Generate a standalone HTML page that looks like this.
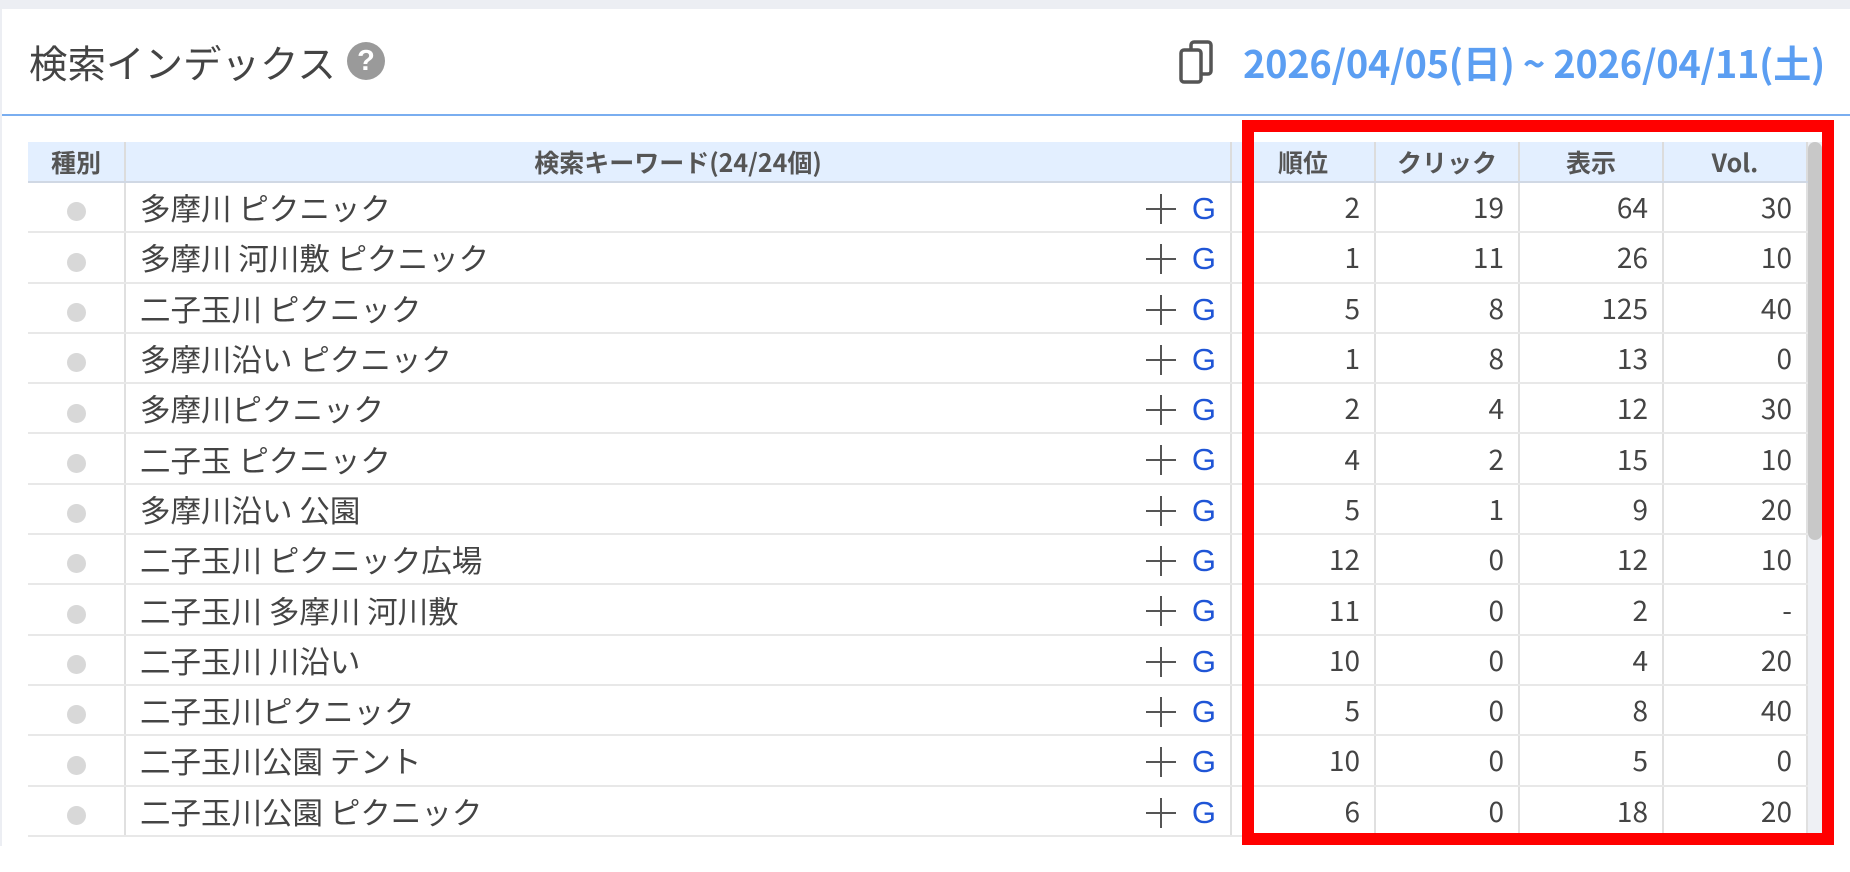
<!DOCTYPE html>
<html><head><meta charset="utf-8"><style>
*{margin:0;padding:0;box-sizing:border-box}
body{width:1850px;height:872px;background:#fff;position:relative;overflow:hidden;font-family:"Liberation Sans","Noto Sans CJK JP",sans-serif;color:#444}
.topbar{position:absolute;left:0;top:0;width:1850px;height:9px;background:#eceef3}
.lborder{position:absolute;left:0;top:9px;width:2px;height:863px;background:#eceef3}
.title{position:absolute;left:29px;top:37px;font-family:"Noto Sans CJK JP",sans-serif;font-size:38.5px;line-height:50px;color:#444;white-space:nowrap}
.help{position:absolute;left:347px;top:42px;width:38px;height:38px;border-radius:50%;background:#9a9a9a;color:#fff;font-weight:bold;font-size:29px;line-height:38px;text-align:center}
.line{position:absolute;left:2px;top:114px;width:1848px;height:2px;background:#7aaef0}
.date{position:absolute;left:1243px;top:37px;font-family:"Noto Sans CJK JP",sans-serif;font-weight:bold;font-size:38px;line-height:50px;color:#5b9ef2;letter-spacing:-0.3px;white-space:nowrap}
.copy{position:absolute;left:1178px;top:40px}
table{position:absolute;left:28px;top:142px;border-collapse:collapse;table-layout:fixed;width:1779px;font-family:"Noto Sans CJK JP",sans-serif}
th{background:#e3efff;height:40px;font-size:25px;font-weight:bold;color:#555;border-right:2px solid #dcdcdc;border-bottom:2px solid #d0d8e4;line-height:36px}
td{height:50.3px;border-right:2px solid #e0e0e0;border-bottom:2px solid #e8e8e8;font-size:30.5px;color:#444;line-height:46px;white-space:nowrap}
td.n{text-align:right;padding-right:14px;font-size:28px}
td.k{padding-left:14px;position:relative}
td.d{text-align:center}
.dot{display:inline-block;width:19px;height:19px;border-radius:50%;background:#d8d8d8;vertical-align:middle}
.pg{position:absolute;right:14px;top:2px;height:48px;display:flex;align-items:center}
.pg svg{margin-right:16px}
.pg i{font-style:normal;color:#1f55d6;font-family:"Liberation Sans",sans-serif;font-size:31px;line-height:30px}
.sb{position:absolute;left:1808px;top:142px;width:14px;height:700px;background:#eef0f4}
.thumb{position:absolute;left:1808px;top:142px;width:14px;height:398px;background:#c8c8c8;border-radius:7px}
.red{position:absolute;left:1242px;top:120px;width:592px;height:725px;border:12px solid #ff0000}
</style></head><body>
<div class="topbar"></div><div class="lborder"></div>
<div class="title">検索インデックス</div>
<div class="help">?</div>
<svg class="copy" width="40" height="46" viewBox="0 0 40 46"><rect x="13" y="2" width="20" height="32" rx="3" fill="none" stroke="#555" stroke-width="3.5"/><rect x="3" y="10" width="20" height="32" rx="3" fill="#fff" stroke="#555" stroke-width="3.5"/></svg>
<div class="date">2026/04/05(日) ~ 2026/04/11(土)</div>
<div class="line"></div>
<table>
<colgroup><col style="width:97px"><col style="width:1106px"><col style="width:144px"><col style="width:144px"><col style="width:144px"><col style="width:144px"></colgroup>
<tr><th>種別</th><th>検索キーワード(24/24個)</th><th>順位</th><th>クリック</th><th>表示</th><th>Vol.</th></tr>
<tr><td class="d"><span class="dot"></span></td><td class="k">多摩川 ピクニック<span class="pg"><svg width="30" height="30"><path d="M0 15H30M15 0V30" stroke="#555" stroke-width="2"/></svg><i>G</i></span></td><td class="n">2</td><td class="n">19</td><td class="n">64</td><td class="n">30</td></tr>
<tr><td class="d"><span class="dot"></span></td><td class="k">多摩川 河川敷 ピクニック<span class="pg"><svg width="30" height="30"><path d="M0 15H30M15 0V30" stroke="#555" stroke-width="2"/></svg><i>G</i></span></td><td class="n">1</td><td class="n">11</td><td class="n">26</td><td class="n">10</td></tr>
<tr><td class="d"><span class="dot"></span></td><td class="k">二子玉川 ピクニック<span class="pg"><svg width="30" height="30"><path d="M0 15H30M15 0V30" stroke="#555" stroke-width="2"/></svg><i>G</i></span></td><td class="n">5</td><td class="n">8</td><td class="n">125</td><td class="n">40</td></tr>
<tr><td class="d"><span class="dot"></span></td><td class="k">多摩川沿い ピクニック<span class="pg"><svg width="30" height="30"><path d="M0 15H30M15 0V30" stroke="#555" stroke-width="2"/></svg><i>G</i></span></td><td class="n">1</td><td class="n">8</td><td class="n">13</td><td class="n">0</td></tr>
<tr><td class="d"><span class="dot"></span></td><td class="k">多摩川ピクニック<span class="pg"><svg width="30" height="30"><path d="M0 15H30M15 0V30" stroke="#555" stroke-width="2"/></svg><i>G</i></span></td><td class="n">2</td><td class="n">4</td><td class="n">12</td><td class="n">30</td></tr>
<tr><td class="d"><span class="dot"></span></td><td class="k">二子玉 ピクニック<span class="pg"><svg width="30" height="30"><path d="M0 15H30M15 0V30" stroke="#555" stroke-width="2"/></svg><i>G</i></span></td><td class="n">4</td><td class="n">2</td><td class="n">15</td><td class="n">10</td></tr>
<tr><td class="d"><span class="dot"></span></td><td class="k">多摩川沿い 公園<span class="pg"><svg width="30" height="30"><path d="M0 15H30M15 0V30" stroke="#555" stroke-width="2"/></svg><i>G</i></span></td><td class="n">5</td><td class="n">1</td><td class="n">9</td><td class="n">20</td></tr>
<tr><td class="d"><span class="dot"></span></td><td class="k">二子玉川 ピクニック広場<span class="pg"><svg width="30" height="30"><path d="M0 15H30M15 0V30" stroke="#555" stroke-width="2"/></svg><i>G</i></span></td><td class="n">12</td><td class="n">0</td><td class="n">12</td><td class="n">10</td></tr>
<tr><td class="d"><span class="dot"></span></td><td class="k">二子玉川 多摩川 河川敷<span class="pg"><svg width="30" height="30"><path d="M0 15H30M15 0V30" stroke="#555" stroke-width="2"/></svg><i>G</i></span></td><td class="n">11</td><td class="n">0</td><td class="n">2</td><td class="n">-</td></tr>
<tr><td class="d"><span class="dot"></span></td><td class="k">二子玉川 川沿い<span class="pg"><svg width="30" height="30"><path d="M0 15H30M15 0V30" stroke="#555" stroke-width="2"/></svg><i>G</i></span></td><td class="n">10</td><td class="n">0</td><td class="n">4</td><td class="n">20</td></tr>
<tr><td class="d"><span class="dot"></span></td><td class="k">二子玉川ピクニック<span class="pg"><svg width="30" height="30"><path d="M0 15H30M15 0V30" stroke="#555" stroke-width="2"/></svg><i>G</i></span></td><td class="n">5</td><td class="n">0</td><td class="n">8</td><td class="n">40</td></tr>
<tr><td class="d"><span class="dot"></span></td><td class="k">二子玉川公園 テント<span class="pg"><svg width="30" height="30"><path d="M0 15H30M15 0V30" stroke="#555" stroke-width="2"/></svg><i>G</i></span></td><td class="n">10</td><td class="n">0</td><td class="n">5</td><td class="n">0</td></tr>
<tr><td class="d"><span class="dot"></span></td><td class="k">二子玉川公園 ピクニック<span class="pg"><svg width="30" height="30"><path d="M0 15H30M15 0V30" stroke="#555" stroke-width="2"/></svg><i>G</i></span></td><td class="n">6</td><td class="n">0</td><td class="n">18</td><td class="n">20</td></tr>
</table>
<div class="sb"></div><div class="thumb"></div>
<div style="position:absolute;left:0;top:846px;width:1850px;height:26px;background:#fff"></div>
<div class="red"></div>
</body></html>
